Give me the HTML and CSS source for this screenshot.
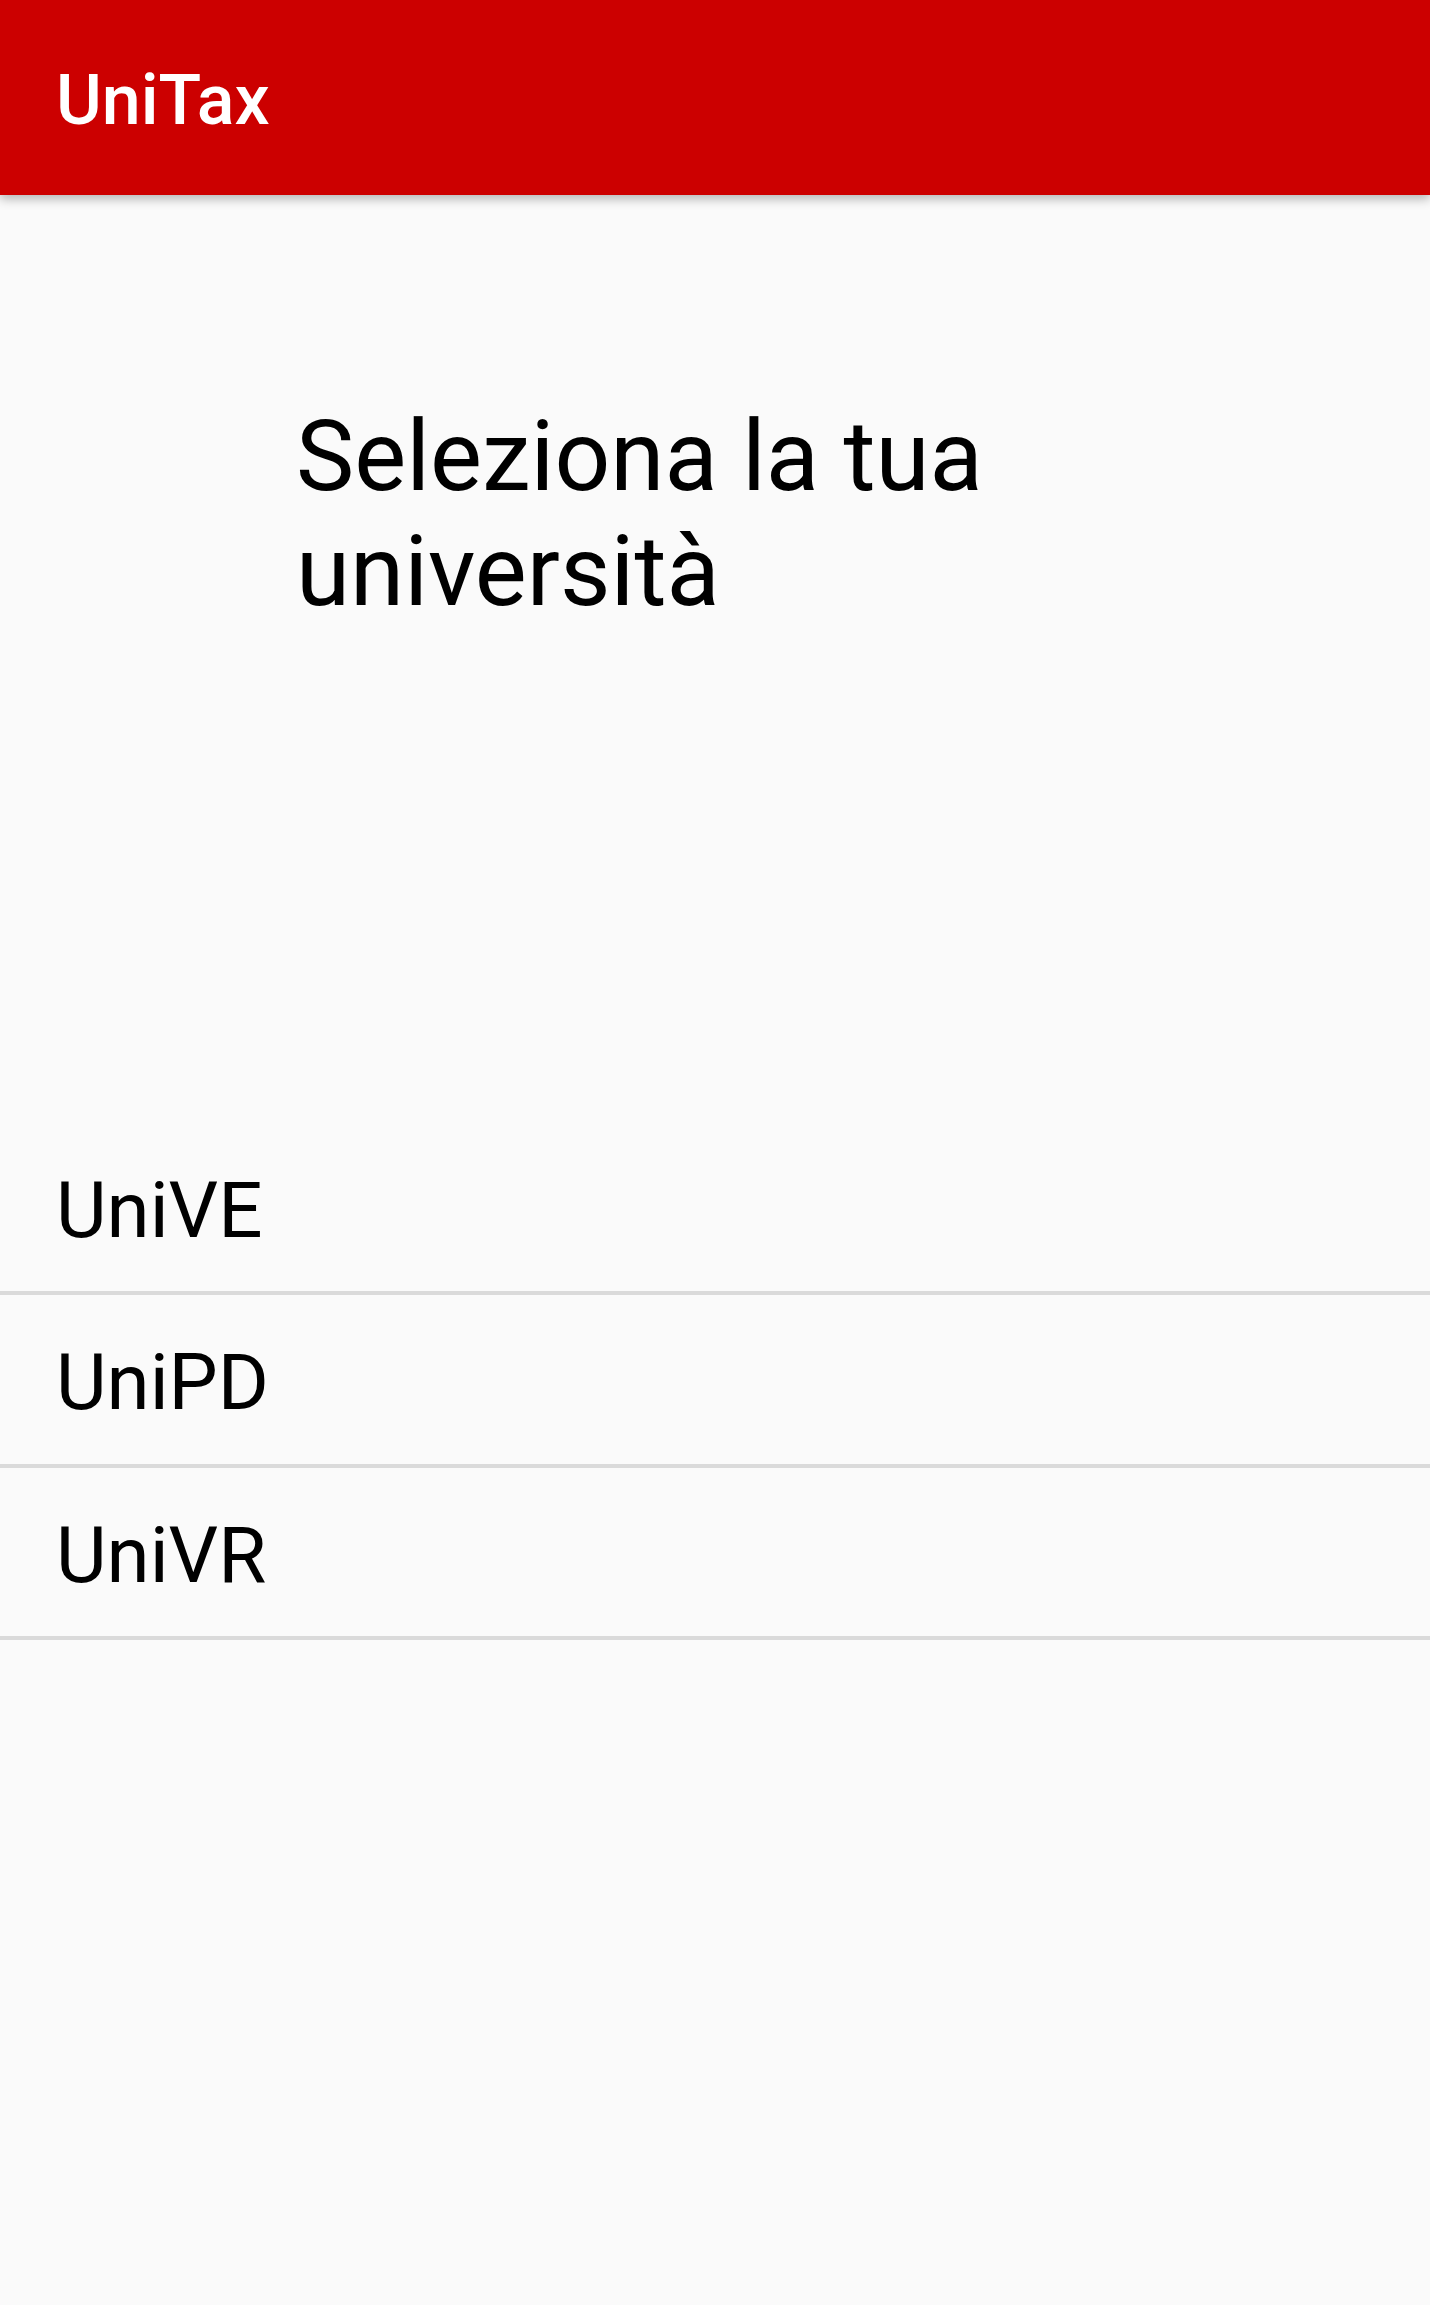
FILE: index.html
```html
<!DOCTYPE html>
<html lang="it">
<head>
<meta charset="utf-8">
<title>UniTax</title>
<link rel="stylesheet" href="styles.css">
</head>
<body>
<header class="appbar">
  <h1 class="appbar-title">UniTax</h1>
</header>
<main class="content">
  <h2 class="prompt">Seleziona la tua università</h2>
  <ul class="uni-list">
    <li class="uni-item">UniVE</li>
    <li class="uni-item">UniPD</li>
    <li class="uni-item">UniVR</li>
  </ul>
</main>
</body>
</html>
```

FILE: styles.css
```css
html, body {
  margin: 0;
  padding: 0;
  background: #fafafa;
  min-height: 2305px;
  font-family: Roboto, "Noto Sans", "Liberation Sans", sans-serif;
  color: #000;
}

.appbar {
  height: 195px;
  background: #cc0000;
  display: flex;
  align-items: center;
  padding: 5px 0 0 56px;
  box-sizing: border-box;
  box-shadow: 0 4px 10px rgba(0, 0, 0, 0.28);
  position: relative;
  z-index: 1;
}

.appbar-title {
  margin: 0;
  font-size: 70px;
  font-weight: 500;
  color: #fff;
  line-height: 1.172;
}

.content {
  display: flex;
  flex-direction: column;
}

.prompt {
  margin: 205px 0 0 296px;
  width: 800px;
  font-size: 98px;
  font-weight: 400;
  line-height: 1.172;
}

.uni-list {
  list-style: none;
  margin: 493px 0 0 0;
  padding: 0;
}

.uni-item {
  font-size: 78px;
  line-height: 1.172;
  padding: 42px 0 35px 56px;
  border-bottom: 4px solid #dadada;
}
```
